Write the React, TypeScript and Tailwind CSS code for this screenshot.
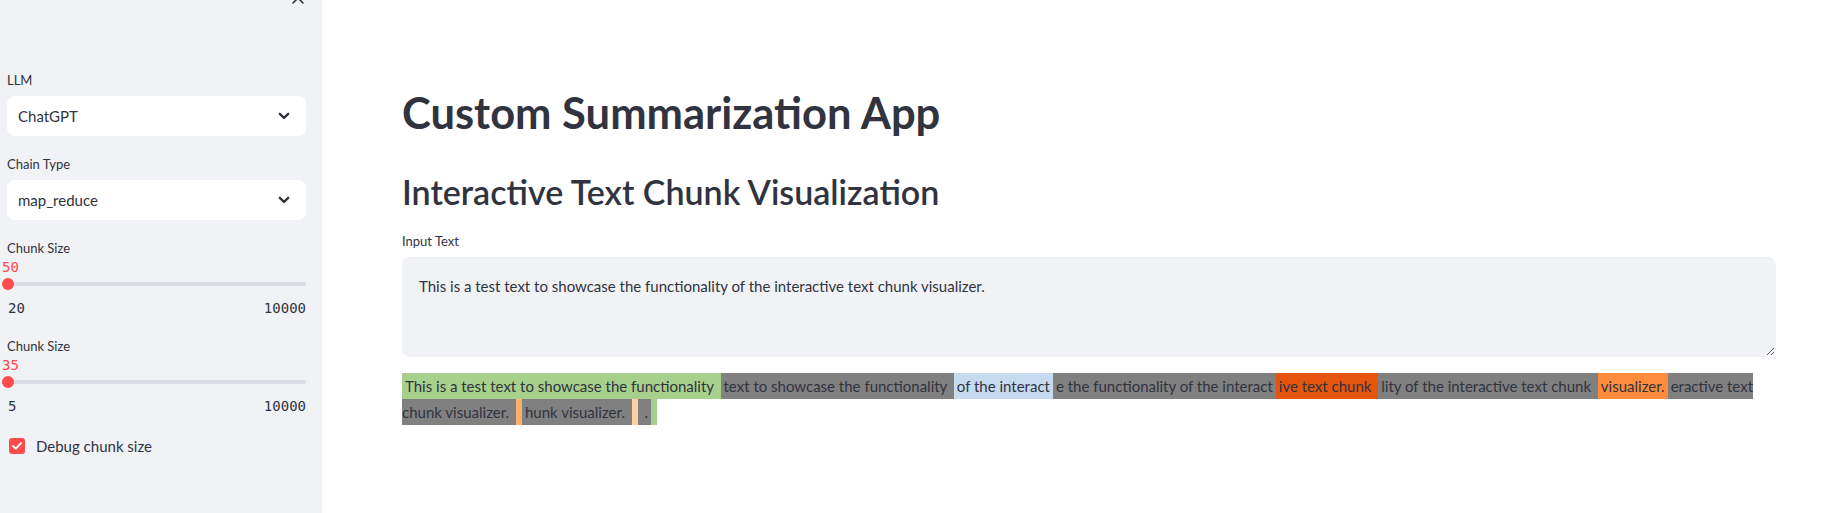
import React from "react";

const sans = "font-['Lato','Noto_Sans',sans-serif]";
const mono = "font-['DejaVu_Sans_Mono','Liberation_Mono',monospace]";

type Chunk = { text: string; bg: string; pl?: boolean; pr?: boolean };

const rowOne: Chunk[] = [
  { text: "This is a test text to showcase the functionality ", bg: "bg-[#a8d08d]" },
  { text: "text to showcase the functionality ", bg: "bg-[#808080]" },
  { text: "of the interact", bg: "bg-[#c6dbef]" },
  { text: "e the functionality of the interact", bg: "bg-[#808080]" },
  { text: "ive text chunk ", bg: "bg-[#e6550d]" },
  { text: "lity of the interactive text chunk ", bg: "bg-[#808080]" },
  { text: "visualizer.", bg: "bg-[#fd8d3c]" },
  { text: "eractive text", bg: "bg-[#808080]", pr: false },
];

const rowTwo: Chunk[] = [
  { text: "chunk visualizer. ", bg: "bg-[#808080]", pl: false },
  { text: "", bg: "bg-[#fdae6b]" },
  { text: "hunk visualizer. ", bg: "bg-[#808080]" },
  { text: "", bg: "bg-[#fdd0a2]" },
  { text: " .", bg: "bg-[#808080]" },
  { text: "", bg: "bg-[#a8d08d]" },
];

function Chevron() {
  return (
    <svg width="12" height="8" viewBox="0 0 12 8" fill="none">
      <path d="M1.8 1.8 L6 5.8 L10.2 1.8" stroke="#31333F" strokeWidth="2.4" strokeLinecap="round" strokeLinejoin="round" />
    </svg>
  );
}

function SelectBox({ label, value }: { label: string; value: string }) {
  return (
    <div className="flex flex-col">
      <div className="h-5 text-[13px] leading-5 text-[#31333F]">{label}</div>
      <div className="mt-[6px] flex h-10 items-center justify-between rounded-lg bg-white pl-[11px] pr-[16px]">
        <span className="text-[15px] text-[#31333F]">{value}</span>
        <Chevron />
      </div>
    </div>
  );
}

function Slider({ label, value, min, max }: { label: string; value: string; min: string; max: string }) {
  return (
    <div className="flex flex-col">
      <div className="h-5 text-[13px] leading-5 text-[#31333F]">{label}</div>
      <div className={`ml-[-5px] mt-[1px] h-4 text-sm leading-4 text-[#ff4b4b] ${mono}`}>{value}</div>
      <div className="relative mt-[3px] flex h-3 items-center pl-[1px]">
        <div className="h-1 w-full rounded-full bg-[#dadde4]" />
        <div className="absolute left-[-5px] top-0 h-3 w-3 rounded-full bg-[#ff4b4b]" />
      </div>
      <div className={`mt-[10px] flex h-4 justify-between pl-[1px] text-sm leading-4 text-[#31333F] ${mono}`}>
        <span>{min}</span>
        <span>{max}</span>
      </div>
    </div>
  );
}

function Sidebar() {
  return (
    <aside className="relative flex h-[513px] w-[322px] shrink-0 flex-col bg-[#f0f2f6] pl-[7px] pr-[16px] pt-[70px]">
      <svg className="absolute left-[292px] top-[-8px]" width="12" height="12" viewBox="0 0 12 12" fill="none">
        <path d="M1 1 L11 11 M11 1 L1 11" stroke="#31333F" strokeWidth="1.6" strokeLinecap="round" />
      </svg>
      <SelectBox label="LLM" value="ChatGPT" />
      <div className="mt-[18px]">
        <SelectBox label="Chain Type" value="map_reduce" />
      </div>
      <div className="mt-[18px]">
        <Slider label="Chunk Size" value="50" min="20" max="10000" />
      </div>
      <div className="mt-[20px]">
        <Slider label="Chunk Size" value="35" min="5" max="10000" />
      </div>
      <label className="mt-[20px] flex h-6 items-center gap-[11px] pl-[2px]">
        <span className="flex h-4 w-4 items-center justify-center rounded-[3px] bg-[#ff4b4b]">
          <svg width="10" height="8" viewBox="0 0 10 8" fill="none">
            <path d="M1 4 L3.8 6.6 L9 1.2" stroke="white" strokeWidth="1.9" strokeLinecap="round" strokeLinejoin="round" />
          </svg>
        </span>
        <span className="text-[15px] text-[#31333F]">Debug chunk size</span>
      </label>
    </aside>
  );
}

function ChunkSpan({ c }: { c: Chunk }) {
  const pl = c.pl === false ? "" : "pl-[3px]";
  const pr = c.pr === false ? "" : "pr-[3px]";
  return <span className={`h-[26px] shrink-0 whitespace-pre leading-[26px] ${pl} ${pr} ${c.bg}`}>{c.text}</span>;
}

export default function App() {
  return (
    <div className={`flex h-[513px] w-full overflow-hidden bg-white text-[#31333F] ${sans}`}>
      <Sidebar />
      <main className="flex min-w-0 flex-1 flex-col pl-[80px] pr-[47px] pt-[86px]">
        <h1 className="text-[43.5px] font-bold leading-[53px]">Custom Summarization App</h1>
        <h2 className="mt-[31px] text-[34px] font-semibold leading-[43px]">Interactive Text Chunk Visualization</h2>
        <div className="mt-[18px] h-5 text-[13px] leading-5">Input Text</div>
        <textarea
          readOnly
          className="mt-[6px] h-[100px] w-full resize-y rounded-lg border border-[#f0f2f6] bg-[#f0f2f6] px-4 py-4 text-[15px] leading-[25.6px] text-[#31333F] outline-none"
          value="This is a test text to showcase the functionality of the interactive text chunk visualizer."
        />
        <div className="mt-[16px] flex flex-col text-[15px]">
          <div className="flex overflow-hidden">
            {rowOne.map((c, i) => (
              <ChunkSpan key={i} c={c} />
            ))}
          </div>
          <div className="flex">
            {rowTwo.map((c, i) => (
              <ChunkSpan key={i} c={c} />
            ))}
          </div>
        </div>
      </main>
    </div>
  );
}
